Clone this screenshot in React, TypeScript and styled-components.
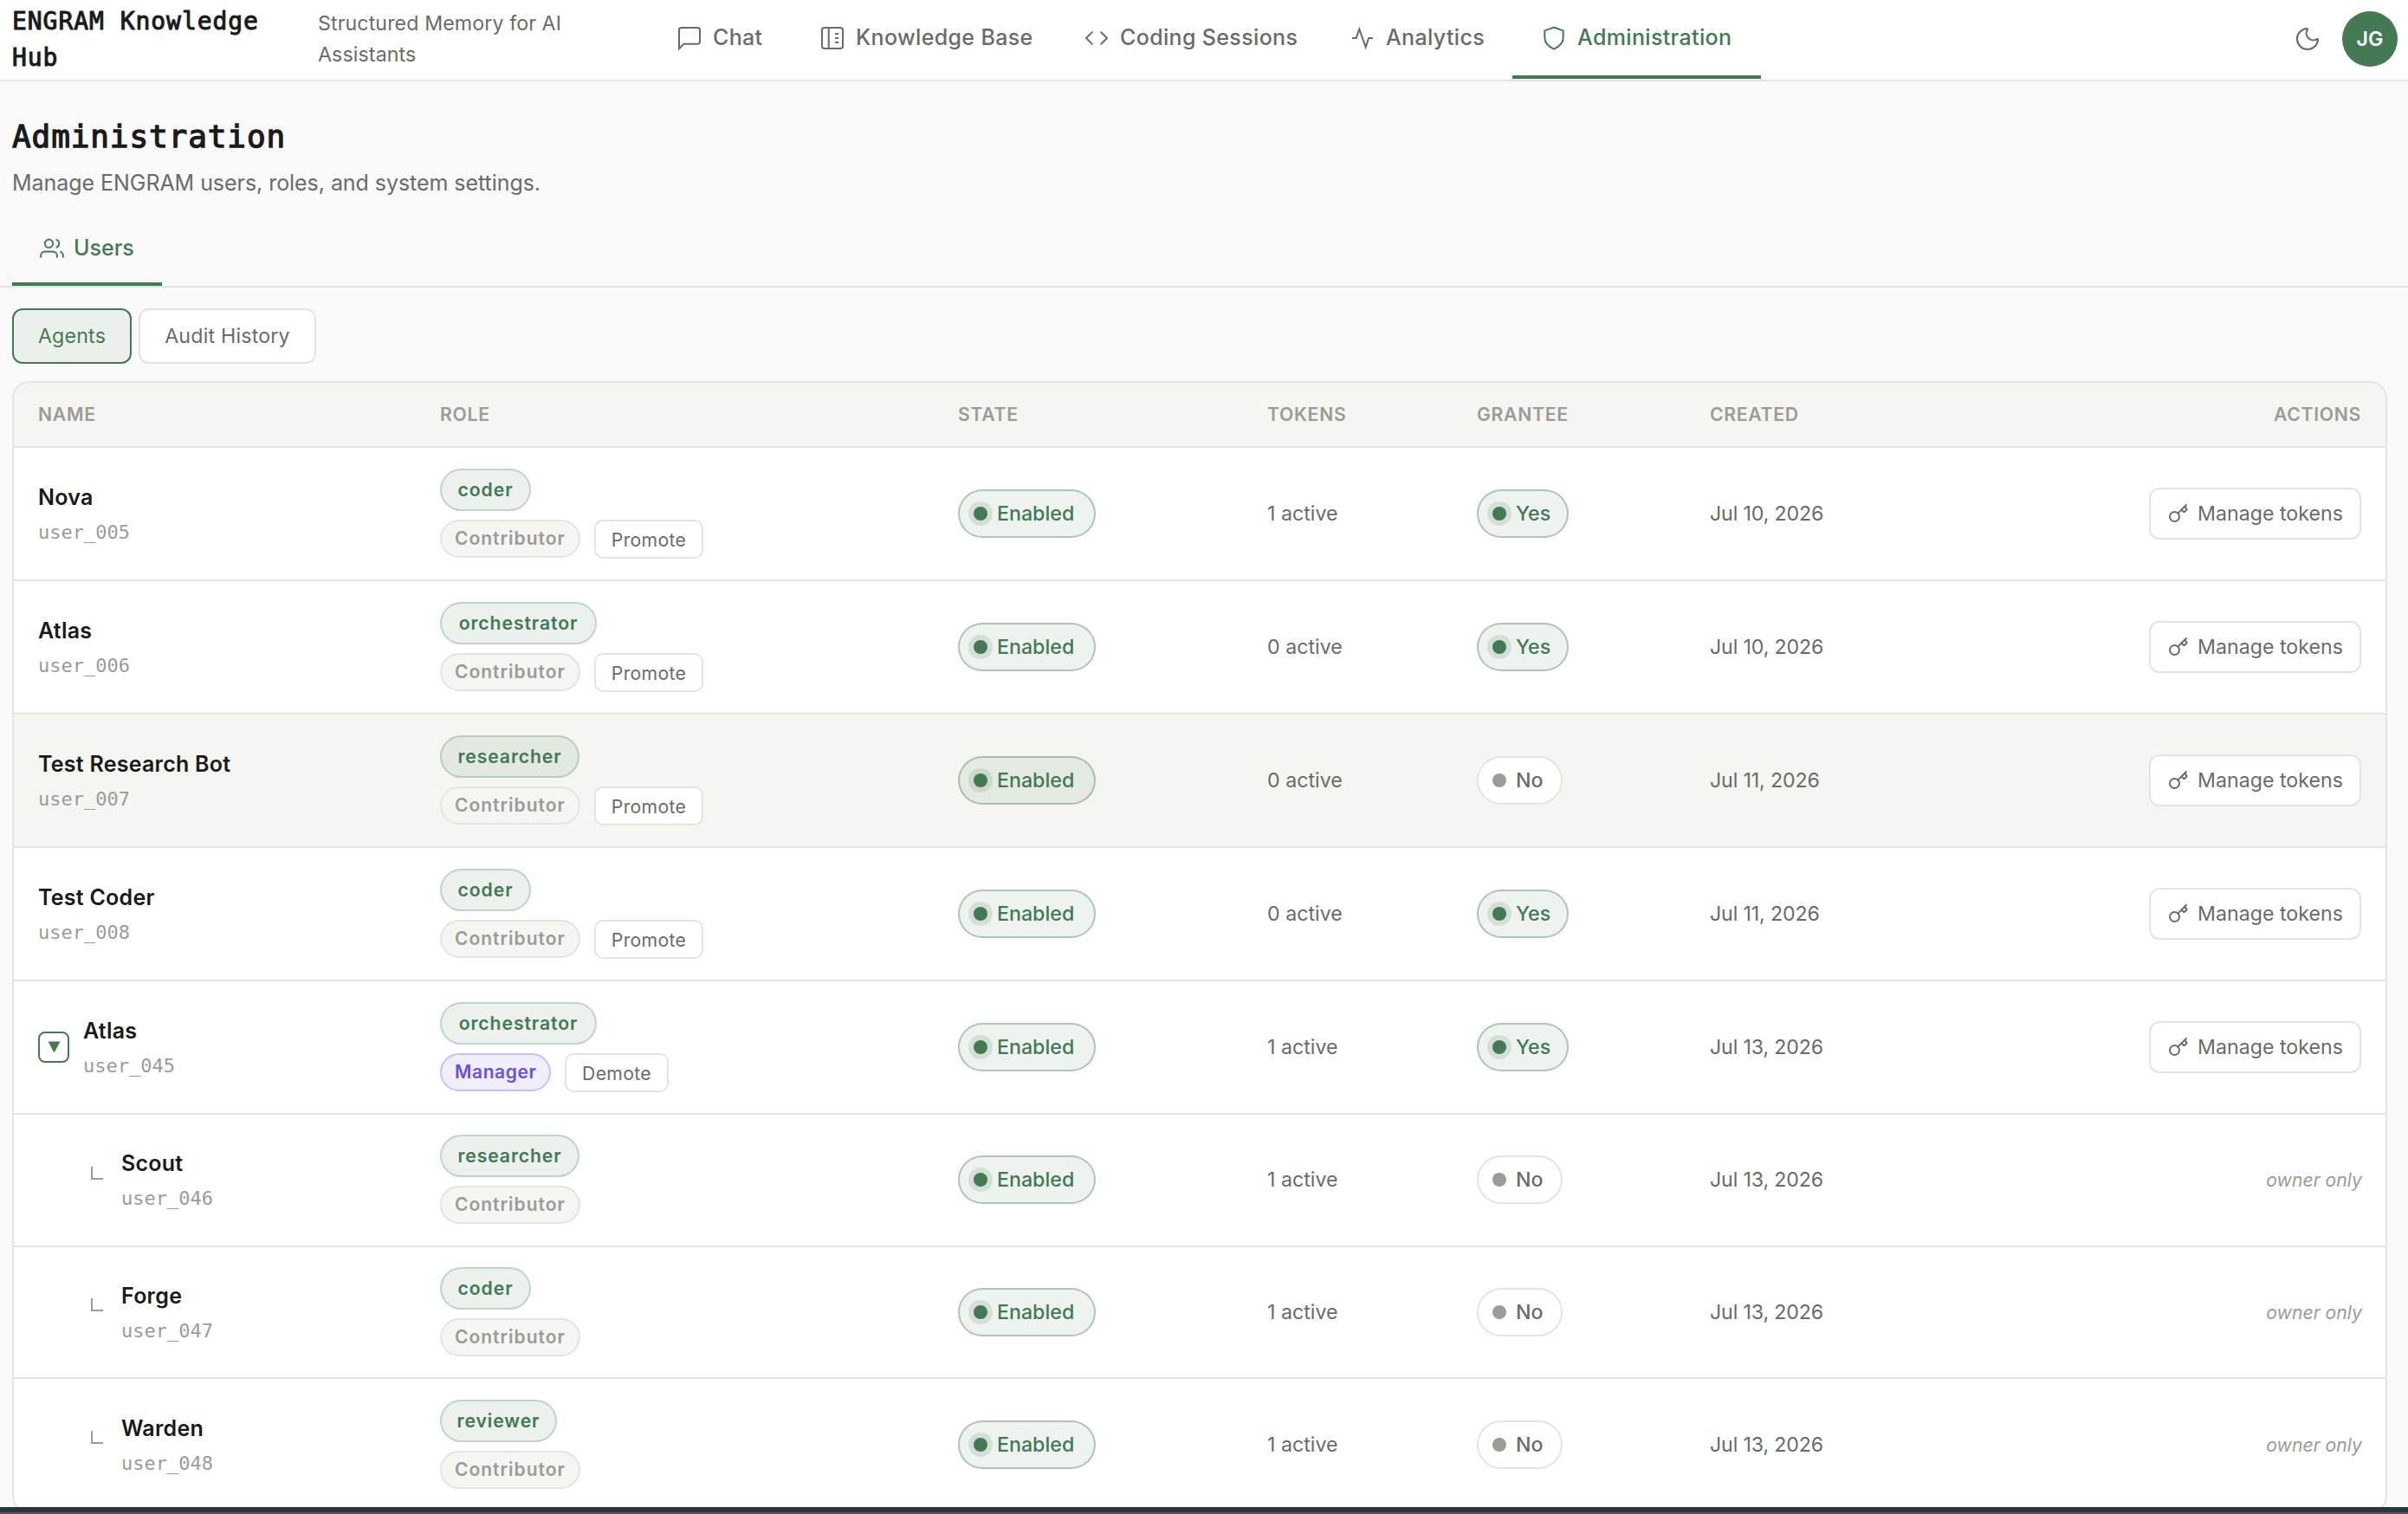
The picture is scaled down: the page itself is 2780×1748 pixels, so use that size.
import React from 'react';
import styled, { createGlobalStyle, css } from 'styled-components';
import { Key, Moon } from 'lucide-react';

type Agent = {
  name: string;
  id: string;
  role: string;
  tier: 'Contributor' | 'Manager';
  action?: 'Promote' | 'Demote';
  tokens: number;
  grantee: boolean;
  created: string;
  hovered?: boolean;
  expanded?: boolean;
  child?: boolean;
};

const AGENTS: Agent[] = [
  { name: 'Nova', id: 'user_005', role: 'coder', tier: 'Contributor', action: 'Promote', tokens: 1, grantee: true, created: 'Jul 10, 2026' },
  { name: 'Atlas', id: 'user_006', role: 'orchestrator', tier: 'Contributor', action: 'Promote', tokens: 0, grantee: true, created: 'Jul 10, 2026' },
  { name: 'Test Research Bot', id: 'user_007', role: 'researcher', tier: 'Contributor', action: 'Promote', tokens: 0, grantee: false, created: 'Jul 11, 2026', hovered: true },
  { name: 'Test Coder', id: 'user_008', role: 'coder', tier: 'Contributor', action: 'Promote', tokens: 0, grantee: true, created: 'Jul 11, 2026' },
  { name: 'Atlas', id: 'user_045', role: 'orchestrator', tier: 'Manager', action: 'Demote', tokens: 1, grantee: true, created: 'Jul 13, 2026', expanded: true },
  { name: 'Scout', id: 'user_046', role: 'researcher', tier: 'Contributor', tokens: 1, grantee: false, created: 'Jul 13, 2026', child: true },
  { name: 'Forge', id: 'user_047', role: 'coder', tier: 'Contributor', tokens: 1, grantee: false, created: 'Jul 13, 2026', child: true },
  { name: 'Warden', id: 'user_048', role: 'reviewer', tier: 'Contributor', tokens: 1, grantee: false, created: 'Jul 13, 2026', child: true },
];

const ROLE_WIDTH: Record<string, number> = {
  coder: 105,
  orchestrator: 181,
  researcher: 161,
  reviewer: 135,
};

const Icon = ({ size = 32, children }: { size?: number; children: React.ReactNode }) => (
  <svg width={size} height={size} viewBox="0 0 24 24" fill="none" stroke="currentColor" strokeWidth={48 / size} strokeMiterlimit={10}>
    {children}
  </svg>
);

const NAV = [
  { label: 'Chat', width: 165, icon: <path d="M3 21.2V5a2 2 0 0 1 2-2h14a2 2 0 0 1 2 2v10a2 2 0 0 1-2 2H7z" /> },
  {
    label: 'Knowledge Base',
    width: 305,
    icon: (
      <>
        <rect x="3" y="3" width="18" height="18" rx="2" />
        <path d="M8.8 3v18M14.4 8.2h3M14.4 12h3M14.4 15.8h3" />
      </>
    ),
  },
  { label: 'Coding Sessions', width: 307, icon: <path d="M8.5 6.5L3 12l5.5 5.5M15.5 6.5L21 12l-5.5 5.5" /> },
  { label: 'Analytics', width: 221, icon: <path d="M3 12h3.6L9.2 4.2l5.6 15.6 2.6-7.8H21" /> },
  { label: 'Administration', width: 287, active: true, icon: <path d="M12 2.6l8 2.9v6c0 4.8-3.4 8-8 10-4.600-2-8-5.200-8-10v-6z" /> },
];

const App = () => (
  <React.Fragment>
    <GlobalStyle />
    <Screen>
      <Header>
        <Brand>ENGRAM Knowledge Hub</Brand>
        <Tagline>Structured Memory for AI Assistants</Tagline>
        <Nav>
          {NAV.map((item) => (
            <NavItem key={item.label} $width={item.width} $active={item.active}>
              <Icon>{item.icon}</Icon>
              <span>{item.label}</span>
            </NavItem>
          ))}
        </Nav>
        <HeaderRight>
          <Moon size={32} strokeWidth={1.6} />
          <Avatar>JG</Avatar>
        </HeaderRight>
      </Header>
      <PageHead>
        <h1>Administration</h1>
        <p>Manage ENGRAM users, roles, and system settings.</p>
      </PageHead>
      <TabBar>
        <Tab>
          <Icon size={28}>
            <path d="M17 21v-2a4 4 0 0 0-4-4H5a4 4 0 0 0-4 4v2M23 21v-2a4 4 0 0 0-3-3.870M16 3.130a4 4 0 0 1 0 7.750" />
            <circle cx="9" cy="7" r="4" />
          </Icon>
          <span>Users</span>
        </Tab>
      </TabBar>
      <SubTabs>
        <SubTab $width={138} $active>Agents</SubTab>
        <SubTab $width={205}>Audit History</SubTab>
      </SubTabs>
      <Table>
        <HeadRow>
          <div>Name</div>
          <div>Role</div>
          <div>State</div>
          <div>Tokens</div>
          <div>Grantee</div>
          <div>Created</div>
          <div>Actions</div>
        </HeadRow>
        {AGENTS.map((agent) => (
          <AgentRow key={agent.id} agent={agent} />
        ))}
      </Table>
      <Dock />
    </Screen>
  </React.Fragment>
);
export default App;

const AgentRow = ({ agent }: { agent: Agent }) => (
  <Row $hovered={agent.hovered} $child={agent.child}>
    <NameCell>
      {agent.expanded && (
        <Toggle>
          <svg width="16" height="14" viewBox="0 0 16 14"><path d="M1.500 0.500h14L8.500 13.500z" fill="currentColor" /></svg>
        </Toggle>
      )}
      {agent.child && <Branch />}
      <div>
        <Name>{agent.name}</Name>
        <UserId>{agent.id}</UserId>
      </div>
    </NameCell>
    <RoleCell>
      <RoleBadge $width={ROLE_WIDTH[agent.role]}>{agent.role}</RoleBadge>
      <TierLine>
        <TierBadge $manager={agent.tier === 'Manager'}>{agent.tier}</TierBadge>
        {agent.action && <TierButton $width={agent.action === 'Promote' ? 126 : 120}>{agent.action}</TierButton>}
      </TierLine>
    </RoleCell>
    <div><Pill $on $width={159}><i />Enabled</Pill></div>
    <div>{agent.tokens} active</div>
    <div>
      <Pill $on={agent.grantee} $width={agent.grantee ? 106 : 99}><i />{agent.grantee ? 'Yes' : 'No'}</Pill>
    </div>
    <Created>{agent.created}</Created>
    <ActionCell>
      {agent.child ? (
        <OwnerOnly>owner only</OwnerOnly>
      ) : (
        <TokenButton>
          <Key size={24} strokeWidth={2} />
          <span>Manage tokens</span>
        </TokenButton>
      )}
    </ActionCell>
  </Row>
);

const GREEN = '#437a53';
const LINE = '#e4e5e1';
const MUTED = '#6b6b68';
const FAINT = '#9c9c97';
const MONO = "'DejaVu Sans Mono', 'Liberation Mono', monospace";

const GlobalStyle = createGlobalStyle`
  * {
    box-sizing: border-box;
  }
  body {
    margin: 0;
    background: #fafafa;
    color: #1a1a1a;
    font-family: Inter, 'Liberation Sans', sans-serif;
    font-size: 23.2px;
    overflow: hidden;
  }
`;
const Screen = styled.div`
  height: 1748px;
  display: flex;
  flex-direction: column;
  overflow: hidden;
  white-space: nowrap;
`;
const Header = styled.header`
  flex: none;
  height: 94px;
  display: flex;
  align-items: flex-start;
  padding: 0 12px 0 14px;
  background: #fff;
  border-bottom: 2px solid ${LINE};
`;
const Brand = styled.div`
  width: 353px;
  padding-top: 4px;
  font: 28px/42px ${MONO};
  letter-spacing: 0.95px;
  -webkit-text-stroke: 1px currentColor;
  white-space: normal;
`;
const Tagline = styled.div`
  width: 381px;
  padding: 9px 90px 0 0;
  line-height: 36px;
  letter-spacing: 0.1px;
  color: ${MUTED};
  white-space: normal;
`;
const Nav = styled.nav`
  display: flex;
`;
const NavItem = styled.a<{ $width: number; $active?: boolean }>`
  width: ${(p) => p.$width}px;
  height: 91px;
  display: flex;
  align-items: center;
  gap: 11px;
  padding: 0 0 0 32px;
  font-size: 25px;
  font-weight: 500;
  letter-spacing: 0.35px;
  color: ${(p) => (p.$active ? GREEN : MUTED)};
  border-bottom: 4px solid ${(p) => (p.$active ? GREEN : 'transparent')};
  span {
    padding-bottom: 2px;
  }
`;
const HeaderRight = styled.div`
  margin-left: auto;
  height: 90px;
  display: flex;
  align-items: center;
  gap: 24px;
  color: ${MUTED};
`;
const Avatar = styled.div`
  width: 64px;
  height: 64px;
  display: grid;
  place-items: center;
  border-radius: 50%;
  background: ${GREEN};
  color: #fff;
  font-weight: 600;
`;
const PageHead = styled.div`
  flex: none;
  height: 146px;
  padding: 37px 14px 0;
  h1 {
    margin: 0;
    font: 36px/54px ${MONO};
    letter-spacing: 0.9px;
    -webkit-text-stroke: 1.3px currentColor;
  }
  p {
    margin: 7px 0 0;
    font-size: 25px;
    line-height: 39px;
    letter-spacing: -0.05px;
    color: ${MUTED};
  }
`;
const TabBar = styled.div`
  flex: none;
  height: 92px;
  padding-left: 14px;
  display: flex;
  border-bottom: 2px solid ${LINE};
`;
const Tab = styled.div`
  width: 173px;
  display: flex;
  align-items: center;
  gap: 11px;
  padding: 7px 0 0 32px;
  font-size: 25px;
  font-weight: 500;
  color: ${GREEN};
  border-bottom: 4px solid ${GREEN};
  span {
    padding-bottom: 1px;
  }
`;
const SubTabs = styled.div`
  flex: none;
  display: flex;
  gap: 8px;
  padding: 24px 14px 20px;
`;
const SubTab = styled.button<{ $width: number; $active?: boolean }>`
  width: ${(p) => p.$width}px;
  height: 64px;
  padding: 0 0 1px;
  font: inherit;
  letter-spacing: 0.2px;
  border-radius: 12px;
  border: 2px solid ${(p) => (p.$active ? GREEN : LINE)};
  background: ${(p) => (p.$active ? '#ebf0ec' : '#fff')};
  color: ${(p) => (p.$active ? GREEN : MUTED)};
`;
const Table = styled.section`
  flex: none;
  margin: 0 24px 0 14px;
  border: 2px solid ${LINE};
  border-radius: 20px;
  background: #fff;
  overflow: hidden;
`;
const columns = css`
  display: grid;
  grid-template-columns: 464px 598px 357px 242px 269px 300px 1fr;
  align-items: center;
  padding: 0 28px;
`;
const HeadRow = styled.div`
  ${columns}
  height: 75px;
  padding-bottom: 1px;
  background: #f5f5f1;
  border-bottom: 2px solid ${LINE};
  color: ${FAINT};
  font-size: 21.2px;
  font-weight: 600;
  letter-spacing: 0.7px;
  text-transform: uppercase;
  & > :last-child {
    text-align: right;
  }
`;
const Row = styled.div<{ $hovered?: boolean; $child?: boolean }>`
  ${columns}
  height: ${(p) => (p.$child ? 152.67 : 154)}px;
  background: ${(p) => (p.$hovered ? '#f5f5f1' : 'transparent')};
  border-bottom: 2px solid ${LINE};
  color: ${MUTED};
`;
const NameCell = styled.div`
  display: flex;
  align-items: center;
`;
const Toggle = styled.div`
  width: 36px;
  height: 36px;
  margin-right: 16px;
  display: grid;
  place-items: center;
  border: 2px solid ${GREEN};
  border-radius: 8px;
  color: ${GREEN};
`;
const Branch = styled.div`
  width: 14px;
  height: 15px;
  margin: -16px 21px 0 61px;
  border-left: 2px solid ${FAINT};
  border-bottom: 2px solid ${FAINT};
`;
const Name = styled.div`
  font-size: 25px;
  font-weight: 600;
  line-height: 39px;
  letter-spacing: 0.25px;
  color: #1a1a1a;
`;
const UserId = styled.div`
  margin-top: 4px;
  font: 22px/33px ${MONO};
  color: ${FAINT};
`;
const Created = styled.div`
  letter-spacing: -0.15px;
`;
const RoleCell = styled.div`
  height: 104px;
`;
const RoleBadge = styled.div<{ $width: number }>`
  width: ${(p) => p.$width}px;
  height: 49px;
  padding-bottom: 1px;
  display: grid;
  place-items: center;
  border: 2px solid rgba(67, 122, 83, 0.25);
  border-radius: 25px;
  background: rgba(67, 122, 83, 0.1);
  color: ${GREEN};
  font-size: 21.2px;
  font-weight: 600;
  letter-spacing: 0.9px;
`;
const TierLine = styled.div`
  display: flex;
  gap: 16px;
  margin-top: 10px;
`;
const TierBadge = styled.div<{ $manager: boolean }>`
  width: ${(p) => (p.$manager ? 128 : 162)}px;
  height: 44px;
  padding-left: 15px;
  border: 2px solid ${(p) => (p.$manager ? '#c9bff5' : LINE)};
  border-radius: 22px;
  background: ${(p) => (p.$manager ? '#f0edfd' : '#f5f5f1')};
  color: ${(p) => (p.$manager ? '#6a4fe0' : FAINT)};
  font-size: 21px;
  font-weight: 600;
  line-height: 39px;
  letter-spacing: ${(p) => (p.$manager ? 0.6 : 1)}px;
`;
const TierButton = styled.button<{ $width: number }>`
  width: ${(p) => p.$width}px;
  height: 45px;
  padding: 0;
  border: 2px solid ${LINE};
  border-radius: 10px;
  background: #fff;
  color: ${MUTED};
  font: inherit;
  font-size: 21.2px;
  letter-spacing: 0.3px;
`;
const Pill = styled.div<{ $width: number; $on?: boolean }>`
  width: ${(p) => p.$width}px;
  height: 56px;
  display: flex;
  align-items: center;
  gap: 11px;
  padding-left: 16px;
  border: 2px solid ${(p) => (p.$on ? 'rgba(67, 110, 83, 0.36)' : LINE)};
  border-radius: 28px;
  background: ${(p) => (p.$on ? 'rgba(67, 122, 83, 0.09)' : '#fff')};
  color: ${(p) => (p.$on ? GREEN : MUTED)};
  font-weight: 500;
  i {
    width: 16px;
    height: 16px;
    border-radius: 50%;
    background: ${(p) => (p.$on ? GREEN : FAINT)};
    box-shadow: ${(p) => (p.$on ? '0 0 0 6px rgba(67, 122, 83, 0.15)' : 'none')};
  }
`;
const ActionCell = styled.div`
  display: flex;
  justify-content: flex-end;
`;
const TokenButton = styled.button`
  width: 245px;
  height: 60px;
  display: flex;
  align-items: center;
  gap: 10px;
  padding: 0 0 0 20px;
  border: 2px solid ${LINE};
  border-radius: 12px;
  background: #fff;
  color: ${MUTED};
  font: inherit;
`;
const OwnerOnly = styled.em`
  margin-right: -1px;
  font-size: 21.2px;
  color: ${FAINT};
`;
// strip of the desktop showing under the window
const Dock = styled.div`
  position: fixed;
  left: 0;
  right: 0;
  bottom: 0;
  height: 8px;
  background: #2b333d;
  border-bottom: 2px solid #4d5662;
`;
